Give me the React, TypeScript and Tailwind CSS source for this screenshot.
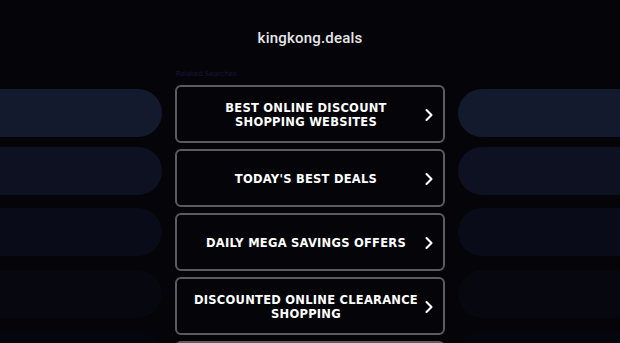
import { ChevronRight } from "lucide-react";

const links = [
  ["BEST ONLINE DISCOUNT", "SHOPPING WEBSITES"],
  ["TODAY'S BEST DEALS"],
  ["DAILY MEGA SAVINGS OFFERS"],
  ["DISCOUNTED ONLINE CLEARANCE", "SHOPPING"],
  ["ONLINE SHOPPING COUPONS"],
];

const pillColors = ["bg-[#141a2e]", "bg-[#0e1122]", "bg-[#090b18]", "bg-[#06070f]", "bg-[#05060d]"];
const pillGaps = ["mt-0", "mt-[10px]", "mt-[13px]", "mt-[14px]", "mt-[14px]"];

function SidePills({ side }: { side: "left" | "right" }) {
  return (
    <div className="flex flex-col pt-[89px]">
      {pillColors.map((color, i) => (
        <div
          key={i}
          className={[
            "h-12 w-full shrink-0",
            color,
            pillGaps[i],
            side === "left" ? "rounded-r-full" : "rounded-l-full",
          ].join(" ")}
        />
      ))}
    </div>
  );
}

export default function App() {
  return (
    <div className="relative h-[343px] w-[620px] overflow-hidden bg-[#050509] font-['DejaVu_Sans',sans-serif]">
      <div className="absolute inset-x-0 top-[27px] text-center font-['Roboto',sans-serif] text-[15px] font-medium tracking-[0.2px] text-[#e6e6ea]">
        kingkong.deals
      </div>
      <div className="grid grid-cols-[162px_270px_162px] gap-x-[13px]">
        <SidePills side="left" />
        <div className="flex flex-col pt-[69px]">
          <div className="mb-[6px] h-[10px] pl-[1px] text-[7px] leading-[10px] text-[#15163a]">Related Searches</div>
          <div className="flex flex-col gap-[6px]">
            {links.map((lines, i) => (
              <a
                key={i}
                href="#"
                className="flex h-[58px] shrink-0 items-center rounded-[6px] border-2 border-[#5c5c60] pl-[16px] pr-[4px] pt-[2px] text-white"
              >
                <span className="flex-1 whitespace-nowrap text-center text-[11.5px] font-bold leading-[14px] tracking-[0.25px]">
                  {lines.map((l) => (
                    <span key={l} className="block">
                      {l}
                    </span>
                  ))}
                </span>
                <ChevronRight className="h-5 w-5 shrink-0" strokeWidth={2.5} aria-hidden="true" />
              </a>
            ))}
          </div>
        </div>
        <SidePills side="right" />
      </div>
    </div>
  );
}
